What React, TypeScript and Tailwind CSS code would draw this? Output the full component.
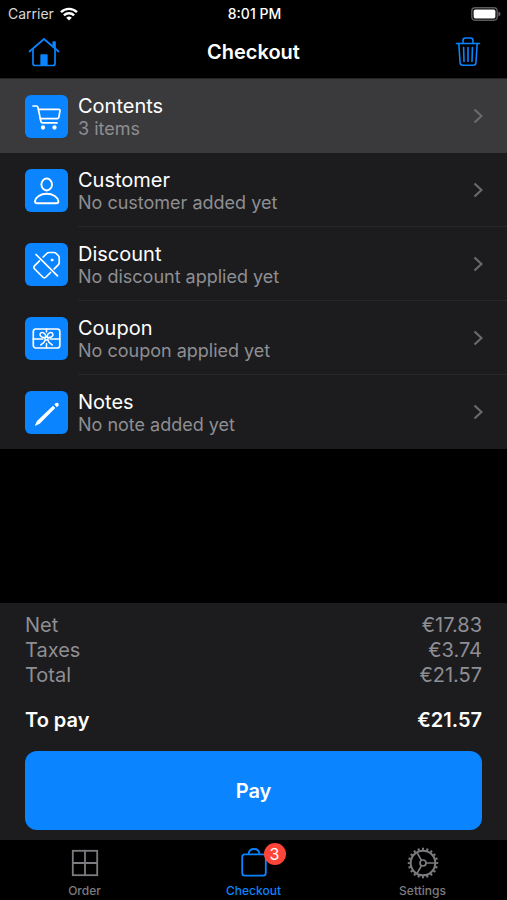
import React from 'react';

type IconProps = { className?: string };

function WifiIcon() {
  return (
    <svg viewBox="0 0 18 14" className="w-[18px] h-[14px]" aria-hidden="true">
      <g fill="none" stroke="#fff" strokeWidth="2.4">
        <path d="M1 5.2a11.4 11.4 0 0 1 16 0" />
        <path d="M3.9 8.4a7.2 7.2 0 0 1 10.2 0" />
      </g>
      <path d="M9 13.6 6.2 10.8a4 4 0 0 1 5.6 0z" fill="#fff" />
    </svg>
  );
}

function BatteryIcon() {
  return (
    <svg viewBox="0 0 30 14" className="w-[30px] h-[14px]" role="img" aria-label="Battery full">
      <rect x="0.8" y="0.8" width="25.4" height="12.4" rx="3.4" fill="none" stroke="#5c5c5e" strokeWidth="1.4" />
      <rect x="2.6" y="2.6" width="21.8" height="8.8" rx="1.6" fill="#fff" />
      <path d="M27.3 4.6c1.5.5 2.3 1.3 2.3 2.4s-.8 1.9-2.3 2.4z" fill="#5c5c5e" />
    </svg>
  );
}

function HouseIcon() {
  return (
    <svg viewBox="0 0 32 30" className="w-8 h-[30px]" fill="none" stroke="currentColor" strokeWidth="1.7" strokeLinecap="round" strokeLinejoin="round" aria-hidden="true">
      <path d="M1.500 14.500 16 2l14.500 12.500" />
      <path d="M5 12v14.500a2 2 0 0 0 2 2h18a2 2 0 0 0 2-2V12" />
      <path d="M25.300 9.500V5h1.700v6" />
      <path d="M13.200 28V18h5.600v10z" fill="currentColor" />
    </svg>
  );
}

function TrashIcon() {
  return (
    <svg viewBox="0 0 26 32" className="w-[26px] h-8" fill="none" stroke="currentColor" strokeWidth="1.600" strokeLinecap="round" strokeLinejoin="round" aria-hidden="true">
      <path d="M1.500 7.500h23" />
      <path d="M8 7.500V4.500A2.500 2.500 0 0 1 10.500 2h5A2.500 2.500 0 0 1 18 4.500v3" />
      <path d="m3.800 7.500 1.300 19.300a2.600 2.600 0 0 0 2.600 2.500h10.600a2.600 2.600 0 0 0 2.600-2.500l1.300-19.300" />
      <path d="m8.600 11.500.4 14M13 11.500v14M17.400 11.500l-.4 14" />
    </svg>
  );
}

function CartIcon({ className }: IconProps) {
  return (
    <svg viewBox="0 0 43 43" className={className} fill="none" stroke="#fff" strokeWidth="1.700" strokeLinecap="round" strokeLinejoin="round" aria-hidden="true">
      <path d="M8 11h3.500c.8 0 1.200.3 1.400 1.100l3 14.400c.2.900.8 1.400 1.700 1.400H32" />
      <path d="M13.500 14.300h20.300c1 0 1.300.6 1.200 1.400l-1.100 6.500c-.2 1-.7 1.500-1.700 1.500H15.400" />
      <circle cx="18" cy="32.500" r="1.300" fill="#fff" />
      <circle cx="29.500" cy="32.500" r="1.300" fill="#fff" />
    </svg>
  );
}

function PersonIcon({ className }: IconProps) {
  return (
    <svg viewBox="0 0 43 43" className={className} fill="none" stroke="#fff" strokeWidth="1.900" aria-hidden="true">
      <ellipse cx="21.700" cy="15.500" rx="5.300" ry="6" />
      <path d="M12 34.300c-1.500 0-2.200-.8-2-2.200.7-4 5.200-7.300 11.700-7.300s11 3.300 11.700 7.300c.2 1.400-.5 2.200-2 2.200z" />
    </svg>
  );
}

function TagSlashIcon({ className }: IconProps) {
  return (
    <svg viewBox="0 0 43 43" className={className} fill="none" stroke="#fff" strokeWidth="1.700" strokeLinecap="round" strokeLinejoin="round" aria-hidden="true">
      <path d="m18.200 14 3.600-3.500c.7-.7 1.400-1 2.400-1h4.600c1 0 1.700.3 2.400 1l2 2c.7.700 1 1.400 1 2.400v4.600c0 1-.3 1.700-1 2.400l-4 4" />
      <path d="m25.500 29.500-4.500 4.500c-1.100 1.100-2.200 1.100-3.300 0l-8-8c-1.100-1.100-1.100-2.200 0-3.300l4.800-4.800" />
      <circle cx="27" cy="17" r="1" fill="#fff" strokeWidth="1" />
      <path d="m11 11.500 21.500 21.300" />
    </svg>
  );
}

function GiftCardIcon({ className }: IconProps) {
  return (
    <svg viewBox="0 0 43 43" className={className} fill="none" stroke="#fff" strokeWidth="1.500" strokeLinecap="round" strokeLinejoin="round" aria-hidden="true">
      <rect x="8.300" y="12" width="26.500" height="19" rx="2.500" strokeWidth="1.700" />
      <path d="M8.300 22H18m7 0h9.800M21.500 12v3m0 11.500V31" />
      <circle cx="21.500" cy="21.500" r="1.600" />
      <path d="M20.300 20.500c-2.500.3-5-.8-5.300-2.700-.2-1.700 1.500-2.800 3-2.200 1.800.7 2.800 2.600 3 4.300" />
      <path d="M22.700 20.500c2.500.3 5-.8 5.300-2.700.2-1.700-1.500-2.800-3-2.200-1.800.7-2.800 2.600-3 4.300" />
      <path d="M20.400 22.800c-.7 2.200-2.200 4-4.700 5.200M22.600 22.800c.7 2.200 2.200 4 4.700 5.200" />
    </svg>
  );
}

function PencilIcon({ className }: IconProps) {
  return (
    <svg viewBox="0 0 43 43" className={className} fill="#fff" aria-hidden="true">
      <path d="M28 14.700 12 30l-2 4.300c-.1.300.1.500.4.400l4.300-2L30.300 17z" />
      <path d="m29.300 13.500 1.200-1.200c1.900-1.700 4.400.8 2.700 2.700L31.900 16.200z" />
    </svg>
  );
}

function GridIcon() {
  return (
    <svg viewBox="0 0 32 32" className="size-8" fill="none" stroke="currentColor" strokeWidth="1.800" aria-hidden="true">
      <rect x="3.800" y="3.800" width="24.400" height="24.400" />
      <path d="M16 3.800v24.400M3.800 16h24.400" />
    </svg>
  );
}

function BagIcon() {
  return (
    <svg viewBox="0 0 32 32" className="size-8" fill="none" stroke="currentColor" strokeWidth="1.800" strokeLinejoin="round" aria-hidden="true">
      <rect x="4.200" y="7.300" width="23.600" height="21.400" rx="2.600" />
      <path d="M10.500 7c.4-3 2.500-5 5.500-5s5.100 2 5.500 5" />
    </svg>
  );
}

function GearIcon() {
  return (
    <svg viewBox="0 0 32 32" className="size-8" fill="none" stroke="currentColor" aria-hidden="true">
      <circle cx="16" cy="16" r="14" strokeWidth="2.400" pathLength="40" strokeDasharray="0.900 1.100" strokeDashoffset="0.450" />
      <circle cx="16" cy="16" r="12.300" strokeWidth="2" />
      <circle cx="16" cy="16" r="3" strokeWidth="1.700" />
      <path d="M19 16h9.300M14.500 13.400 9.900 5.400M14.500 18.600l-4.600 8" strokeWidth="1.700" />
    </svg>
  );
}

const rows = [
  { title: 'Contents', detail: '3 items', Icon: CartIcon, active: true },
  { title: 'Customer', detail: 'No customer added yet', Icon: PersonIcon, active: false },
  { title: 'Discount', detail: 'No discount applied yet', Icon: TagSlashIcon, active: false },
  { title: 'Coupon', detail: 'No coupon applied yet', Icon: GiftCardIcon, active: false },
  { title: 'Notes', detail: 'No note added yet', Icon: PencilIcon, active: false },
];

const totals = [
  { label: 'Net', value: '€17.83' },
  { label: 'Taxes', value: '€3.74' },
  { label: 'Total', value: '€21.57' },
];

export default function App() {
  return (
    <div className="min-h-screen flex flex-col bg-black text-white font-['Inter',sans-serif]">
      <div className="grid grid-cols-3 items-center h-7 pl-2 pr-1.5 pb-px text-sm">
        <div className="flex items-center gap-1.5 text-[#d8d8d8]">
          <span>Carrier</span>
          <WifiIcon />
        </div>
        <span className="text-center font-medium">8:01 PM</span>
        <div className="flex justify-end">
          <BatteryIcon />
        </div>
      </div>

      <header className="grid grid-cols-3 items-center h-[51px] px-6 pb-0.5 border-b border-[#262628]">
        <button type="button" aria-label="Home" className="justify-self-start ml-1 text-[#0a84ff]">
          <HouseIcon />
        </button>
        <h1 className="text-center text-xl font-semibold">Checkout</h1>
        <button type="button" aria-label="Delete" className="justify-self-end mr-0.5 text-[#0a84ff]">
          <TrashIcon />
        </button>
      </header>

      <main className="flex-1 flex flex-col">
        <ul className="bg-[#1c1c1e]">
          {rows.map(({ title, detail, Icon, active }, i) => (
            <li key={title} className={active ? 'bg-[#3a3a3c]' : ''}>
              <a href="#" className="flex items-center h-[74px] pl-[25px]">
                <Icon className="size-[43px] shrink-0 rounded-md bg-[#0a84ff]" />
                <div className={`flex-1 flex items-center justify-between h-full ml-[10px] pr-6 border-b ${active || i === rows.length - 1 ? 'border-transparent' : 'border-[#272729]'}`}>
                  <div className="pt-0.5">
                    <div className="text-xl leading-6">{title}</div>
                    <div className="text-lg leading-[22px] text-[#8e8e93]">{detail}</div>
                  </div>
                  <svg viewBox="0 0 10 16" className="w-[10px] h-4" fill="none" stroke="#6a6a6d" strokeWidth="2.200" aria-hidden="true">
                    <path d="m1.500 1.500 7 6.500-7 6.500" />
                  </svg>
                </div>
              </a>
            </li>
          ))}
        </ul>

        <section className="mt-auto bg-[#1c1c1e] px-[25px] pt-[10px] pb-[10px]">
          <dl className="text-xl leading-[25px]">
            {totals.map((t) => (
              <div key={t.label} className="flex justify-between text-[#8e8e93]">
                <dt>{t.label}</dt>
                <dd>{t.value}</dd>
              </div>
            ))}
            <div className="flex justify-between mt-5 font-semibold">
              <dt>To pay</dt>
              <dd>€21.57</dd>
            </div>
          </dl>
          <button type="button" className="w-full h-[79px] mt-[18px] rounded-xl bg-[#0a84ff] text-xl font-semibold">
            Pay
          </button>
        </section>
      </main>

      <nav className="grid grid-cols-3 h-[60px] pt-[7px] text-xs leading-4 font-medium text-[#7c7c80]">
        <a href="#" className="flex flex-col items-center gap-1">
          <GridIcon />
          Order
        </a>
        <a href="#" aria-current="page" className="flex flex-col items-center gap-1 text-[#0a84ff]">
          <span className="relative">
            <BagIcon />
            <span className="absolute -top-1 left-[26px] flex items-center justify-center size-[22px] rounded-full bg-[#ff453a] text-base font-normal text-white">
              3
            </span>
          </span>
          Checkout
        </a>
        <a href="#" className="flex flex-col items-center gap-1">
          <GearIcon />
          Settings
        </a>
      </nav>
    </div>
  );
}
